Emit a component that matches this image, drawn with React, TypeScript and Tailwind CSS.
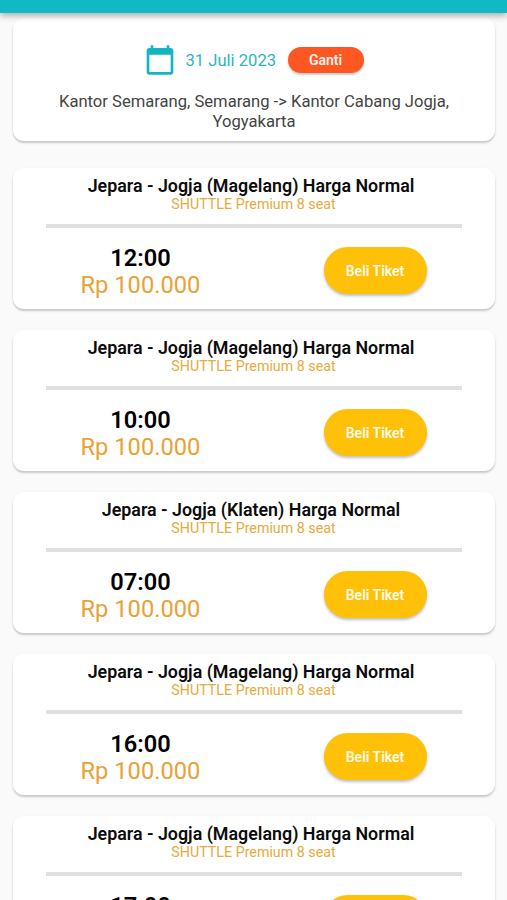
import { MdCalendarToday } from "react-icons/md";

interface Trip {
  route: string;
  service: string;
  time: string;
  price: string;
}

const trips: Trip[] = [
  { route: "Jepara - Jogja (Magelang) Harga Normal", service: "SHUTTLE Premium 8 seat", time: "12:00", price: "Rp 100.000" },
  { route: "Jepara - Jogja (Magelang) Harga Normal", service: "SHUTTLE Premium 8 seat", time: "10:00", price: "Rp 100.000" },
  { route: "Jepara - Jogja (Klaten) Harga Normal", service: "SHUTTLE Premium 8 seat", time: "07:00", price: "Rp 100.000" },
  { route: "Jepara - Jogja (Magelang) Harga Normal", service: "SHUTTLE Premium 8 seat", time: "16:00", price: "Rp 100.000" },
  { route: "Jepara - Jogja (Magelang) Harga Normal", service: "SHUTTLE Premium 8 seat", time: "17:00", price: "Rp 100.000" },
];

const SearchCard = () => (
  <section className="flex h-[123px] shrink-0 flex-col items-center rounded-[11px] bg-white pt-[26px] shadow-[0_2px_2px_rgba(0,0,0,0.18),0_1px_4px_rgba(0,0,0,0.04)]">
    <div className="flex h-8 items-center">
      <MdCalendarToday className="size-8 text-[#12b5c0]" />
      <span className="ml-[10px] w-[90px] pt-[2px] text-[16.6px] whitespace-nowrap text-[#2eb5bb]">31 Juli 2023</span>
      <button className="ml-3 h-[26px] w-[76px] rounded-full bg-[#ff5722] text-[14px] font-semibold text-[#fff3ee] shadow-[0_2px_2px_rgba(0,0,0,0.2)]">
        Ganti
      </button>
    </div>
    <p className="mt-4 w-[400px] pl-px text-center text-[16.6px] leading-5 text-[#444]">
      Kantor Semarang, Semarang -&gt; Kantor Cabang Jogja, Yogyakarta
    </p>
  </section>
);

const TripCard = ({ route, service, time, price }: Trip) => (
  <section className="flex h-[141px] shrink-0 flex-col rounded-[11px] bg-white px-[33px] pt-[7px] shadow-[0_2px_2px_rgba(0,0,0,0.18),0_1px_4px_rgba(0,0,0,0.04)]">
    <h2 className="pr-[5px] text-center text-[17.85px] leading-[21px] font-semibold whitespace-nowrap text-[#0c0c0c]">{route}</h2>
    <p className="text-center text-[14.25px] leading-4 text-[#e5ab3d]">{service}</p>
    <div className="mt-3 h-1 shrink-0 bg-[#e0e0e0]" />
    <div className="flex items-start justify-between px-[35px] pt-[16px]">
      <div className="w-[119px] pt-px text-center whitespace-nowrap">
        <div className="pl-px text-[23.6px] leading-[27px] font-semibold text-black">{time}</div>
        <div className="text-[23.7px] leading-[27px] text-[#e8a237]">{price}</div>
      </div>
      <button className="mt-[3px] h-[47px] w-[103px] rounded-full bg-[#fec107] pt-px text-[14px] font-semibold text-[#fffbea] shadow-[0_2px_3px_rgba(0,0,0,0.25)]">
        Beli Tiket
      </button>
    </div>
  </section>
);

const App = () => {
  return (
    <div className="flex h-[900px] w-[507px] flex-col overflow-hidden bg-[#fafafa] font-['Roboto',sans-serif]">
      <header className="relative h-[12.5px] shrink-0 bg-[#10bac4] shadow-[0_3px_6px_rgba(0,0,0,0.3)]" />
      <main className="flex flex-col px-[12.5px] pt-[5.5px]">
        <SearchCard />
        <div className="mt-[27px] flex flex-col gap-[21px]">
          {trips.map((trip) => (
            <TripCard key={trip.time} {...trip} />
          ))}
        </div>
      </main>
    </div>
  );
};

export default App;
